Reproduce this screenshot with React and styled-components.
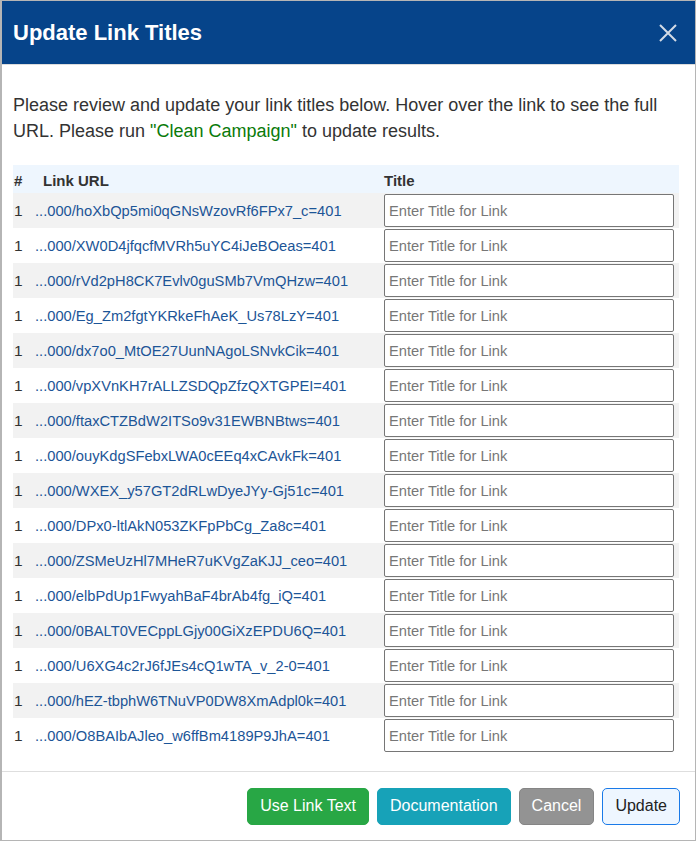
import React from 'react';
import styled, { createGlobalStyle } from 'styled-components';

const GlobalStyle = createGlobalStyle`
  html, body { margin: 0; padding: 0; background: #fff; }
  body { font-family: "Liberation Sans", Arial, sans-serif; color: #333; }
  * { box-sizing: border-box; }
`;

const Modal = styled.div`
  width: 696px;
  height: 841px;
  border: 1px solid #b5b5b5;
  border-left-width: 2px;
  display: flex;
  flex-direction: column;
  background: #fff;
`;

const Header = styled.div`
  height: 64px;
  background: #06448a;
  display: flex;
  align-items: center;
  justify-content: space-between;
  padding: 0 16px 0 11px;
  border-bottom: 1px solid #dcdcdc;
`;

const Title = styled.h1`
  margin: 0;
  font-size: 22px;
  font-weight: bold;
  color: #fff;
`;

const Close = styled.button`
  border: none;
  background: none;
  padding: 0;
  width: 22px;
  height: 22px;
  display: flex;
  align-items: center;
  justify-content: center;
  cursor: pointer;
`;

const Body = styled.div`
  flex: 1;
  padding: 27px 15px 16px 11px;
`;

const Intro = styled.p`
  margin: 0 0 21px;
  font-size: 18px;
  line-height: 26px;
  color: #333;
`;

const Quote = styled.span`
  color: #0a7a0a;
`;

const Table = styled.div`
  width: 666px;
  display: grid;
  grid-template-columns: 22px 349px 1fr;
`;

const Row = styled.div`
  display: contents;
  & > div {
    background: ${p => (p.$head ? '#eef6fe' : p.$stripe ? '#f2f2f2' : '#fff')};
    height: ${p => (p.$head ? '28px' : '35px')};
  }
`;

const Cell = styled.div`
  display: flex;
  align-items: center;
  font-size: ${p => (p.$head ? '15px' : '15.5px')};
  font-weight: ${p => (p.$head ? 'bold' : 'normal')};
  color: #333;
  padding-top: ${p => (p.$head ? '3px' : '0')};
  padding-left: ${p => (p.$first ? '1px' : '0')};
  white-space: nowrap;
`;

const HeadUrl = styled(Cell)`
  padding-left: 8px;
`;

const UrlLink = styled.a`
  color: #1c5597;
  text-decoration: none;
  font-size: 14.7px;
`;

const InputCell = styled(Cell)`
  padding-right: 5px;
`;

const TitleInput = styled.input`
  width: 100%;
  height: 33px;
  border: 1px solid #767676;
  border-radius: 2px;
  padding: 0 4px;
  font-family: "Liberation Sans", Arial, sans-serif;
  font-size: 14.7px;
  color: #333;
  &::placeholder { color: #777; }
`;

const Footer = styled.div`
  border-top: 1px solid #dedede;
  height: 69px;
  display: flex;
  justify-content: flex-end;
  align-items: center;
  gap: 8px;
  padding: 0 15px 0 0;
`;

const Btn = styled.button`
  height: 37px;
  padding: 0 12px;
  border-radius: 5px;
  font-family: "Liberation Sans", Arial, sans-serif;
  font-size: 16px;
  color: ${p => p.$fg};
  background: ${p => p.$bg};
  border: 1px solid ${p => p.$bd};
  cursor: pointer;
`;

const urls = [
  'hoXbQp5mi0qGNsWzovRf6FPx7_c',
  'XW0D4jfqcfMVRh5uYC4iJeBOeas',
  'rVd2pH8CK7Evlv0guSMb7VmQHzw',
  'Eg_Zm2fgtYKRkeFhAeK_Us78LzY',
  'dx7o0_MtOE27UunNAgoLSNvkCik',
  'vpXVnKH7rALLZSDQpZfzQXTGPEI',
  'ftaxCTZBdW2ITSo9v31EWBNBtws',
  'ouyKdgSFebxLWA0cEEq4xCAvkFk',
  'WXEX_y57GT2dRLwDyeJYy-Gj51c',
  'DPx0-ltlAkN053ZKFpPbCg_Za8c',
  'ZSMeUzHl7MHeR7uKVgZaKJJ_ceo',
  'elbPdUp1FwyahBaF4brAb4fg_iQ',
  '0BALT0VECppLGjy00GiXzEPDU6Q',
  'U6XG4c2rJ6fJEs4cQ1wTA_v_2-0',
  'hEZ-tbphW6TNuVP0DW8XmAdpl0k',
  'O8BAIbAJleo_w6ffBm4189P9JhA',
];

export default function App() {
  return (
    <>
      <GlobalStyle />
      <Modal>
        <Header>
          <Title>Update Link Titles</Title>
          <Close aria-label="Close">
            <svg width="20" height="20" viewBox="0 0 20 20">
              <path d="M2 2L18 18M18 2L2 18" stroke="#d3dbe6" strokeWidth="2" />
            </svg>
          </Close>
        </Header>
        <Body>
          <Intro>
            Please review and update your link titles below. Hover over the link to see the full
            URL. Please run <Quote>"Clean Campaign"</Quote> to update results.
          </Intro>
          <Table>
            <Row $head>
              <Cell $head $first>#</Cell>
              <HeadUrl $head>Link URL</HeadUrl>
              <Cell $head>Title</Cell>
            </Row>
            {urls.map((u, i) => (
              <Row key={u} $stripe={i % 2 === 0}>
                <Cell $first>1</Cell>
                <Cell>
                  <UrlLink href="#" title={u}>...000/{u}=401</UrlLink>
                </Cell>
                <InputCell>
                  <TitleInput placeholder="Enter Title for Link" />
                </InputCell>
              </Row>
            ))}
          </Table>
        </Body>
        <Footer>
          <Btn $bg="#28a745" $bd="#28a745" $fg="#fff">Use Link Text</Btn>
          <Btn $bg="#17a2b8" $bd="#17a2b8" $fg="#fff">Documentation</Btn>
          <Btn $bg="#939393" $bd="#858585" $fg="#fff">Cancel</Btn>
          <Btn $bg="#eef6ff" $bd="#1a7ae8" $fg="#222">Update</Btn>
        </Footer>
      </Modal>
    </>
  );
}
